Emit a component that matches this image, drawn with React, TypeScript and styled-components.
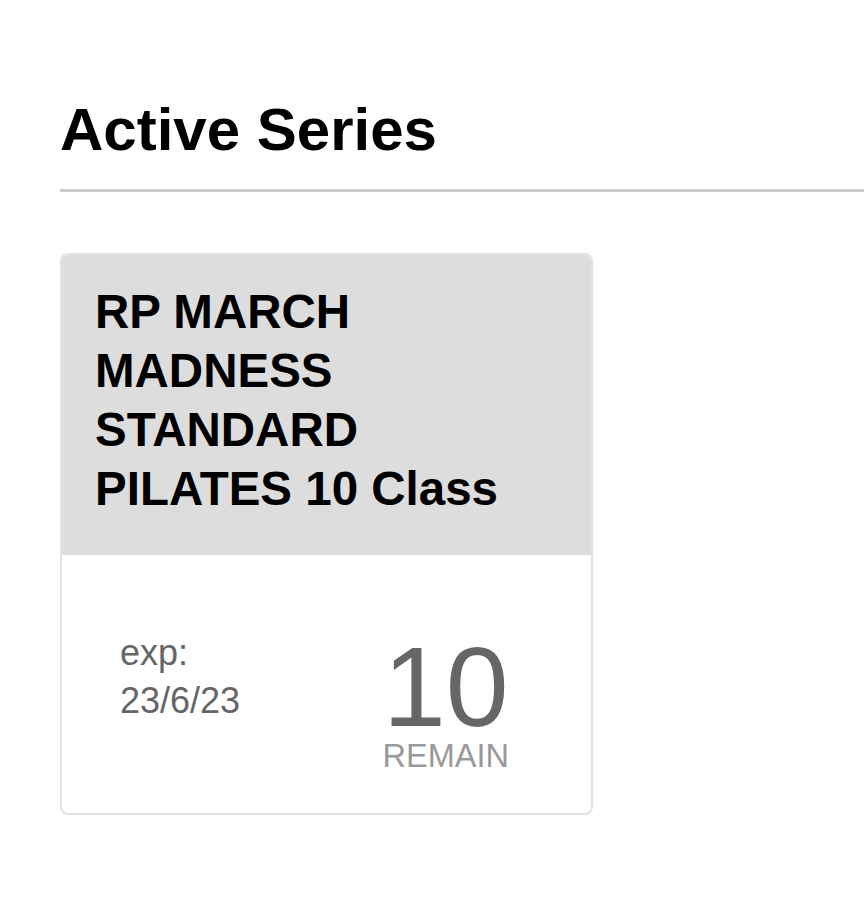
import styled, { createGlobalStyle } from 'styled-components';

const GlobalStyle = createGlobalStyle`
  html, body {
    margin: 0;
    padding: 0;
    background: #fff;
    font-family: 'Liberation Sans', Arial, sans-serif;
  }
`;

const Page = styled.div`
  padding: 95px 0 0 60px;
`;

const Heading = styled.h1`
  margin: 0;
  font-size: 60px;
  font-weight: 700;
  line-height: 69px;
  color: #000;
`;

const Divider = styled.hr`
  margin: 25px 0 61px;
  border: 0;
  height: 3px;
  background: #cccccc;
`;

const Card = styled.div`
  width: 533px;
  height: 562px;
  box-sizing: border-box;
  border: 2px solid #e2e2e2;
  border-radius: 8px;
  overflow: hidden;
  display: flex;
  flex-direction: column;
`;

const CardHeader = styled.div`
  background: #dddddd;
  padding: 27px 33px 28px;
  height: 300px;
  box-sizing: border-box;
`;

const CardTitle = styled.h2`
  margin: 0;
  font-size: 47.5px;
  font-weight: 700;
  line-height: 59px;
  color: #000;
`;

const CardBody = styled.div`
  flex: 1;
  display: flex;
  align-items: flex-start;
  justify-content: space-between;
  padding: 74px 82px 0 58px;
`;

const Expiry = styled.div`
  font-size: 36px;
  line-height: 48px;
  color: #666;
`;

const Counter = styled.div`
  display: flex;
  flex-direction: column;
  align-items: center;
  margin-top: 6px;
`;

const Count = styled.div`
  font-size: 113px;
  line-height: 104px;
  color: #666;
`;

const CountLabel = styled.div`
  font-size: 32.5px;
  line-height: 34px;
  color: #999;
`;

export default function App() {
  return (
    <Page>
      <GlobalStyle />
      <Heading>Active Series</Heading>
      <Divider />
      <Card>
        <CardHeader>
          <CardTitle>
            RP MARCH
            <br />
            MADNESS
            <br />
            STANDARD
            <br />
            PILATES 10 Class
          </CardTitle>
        </CardHeader>
        <CardBody>
          <Expiry>
            exp:
            <br />
            23/6/23
          </Expiry>
          <Counter>
            <Count>10</Count>
            <CountLabel>REMAIN</CountLabel>
          </Counter>
        </CardBody>
      </Card>
    </Page>
  );
}
